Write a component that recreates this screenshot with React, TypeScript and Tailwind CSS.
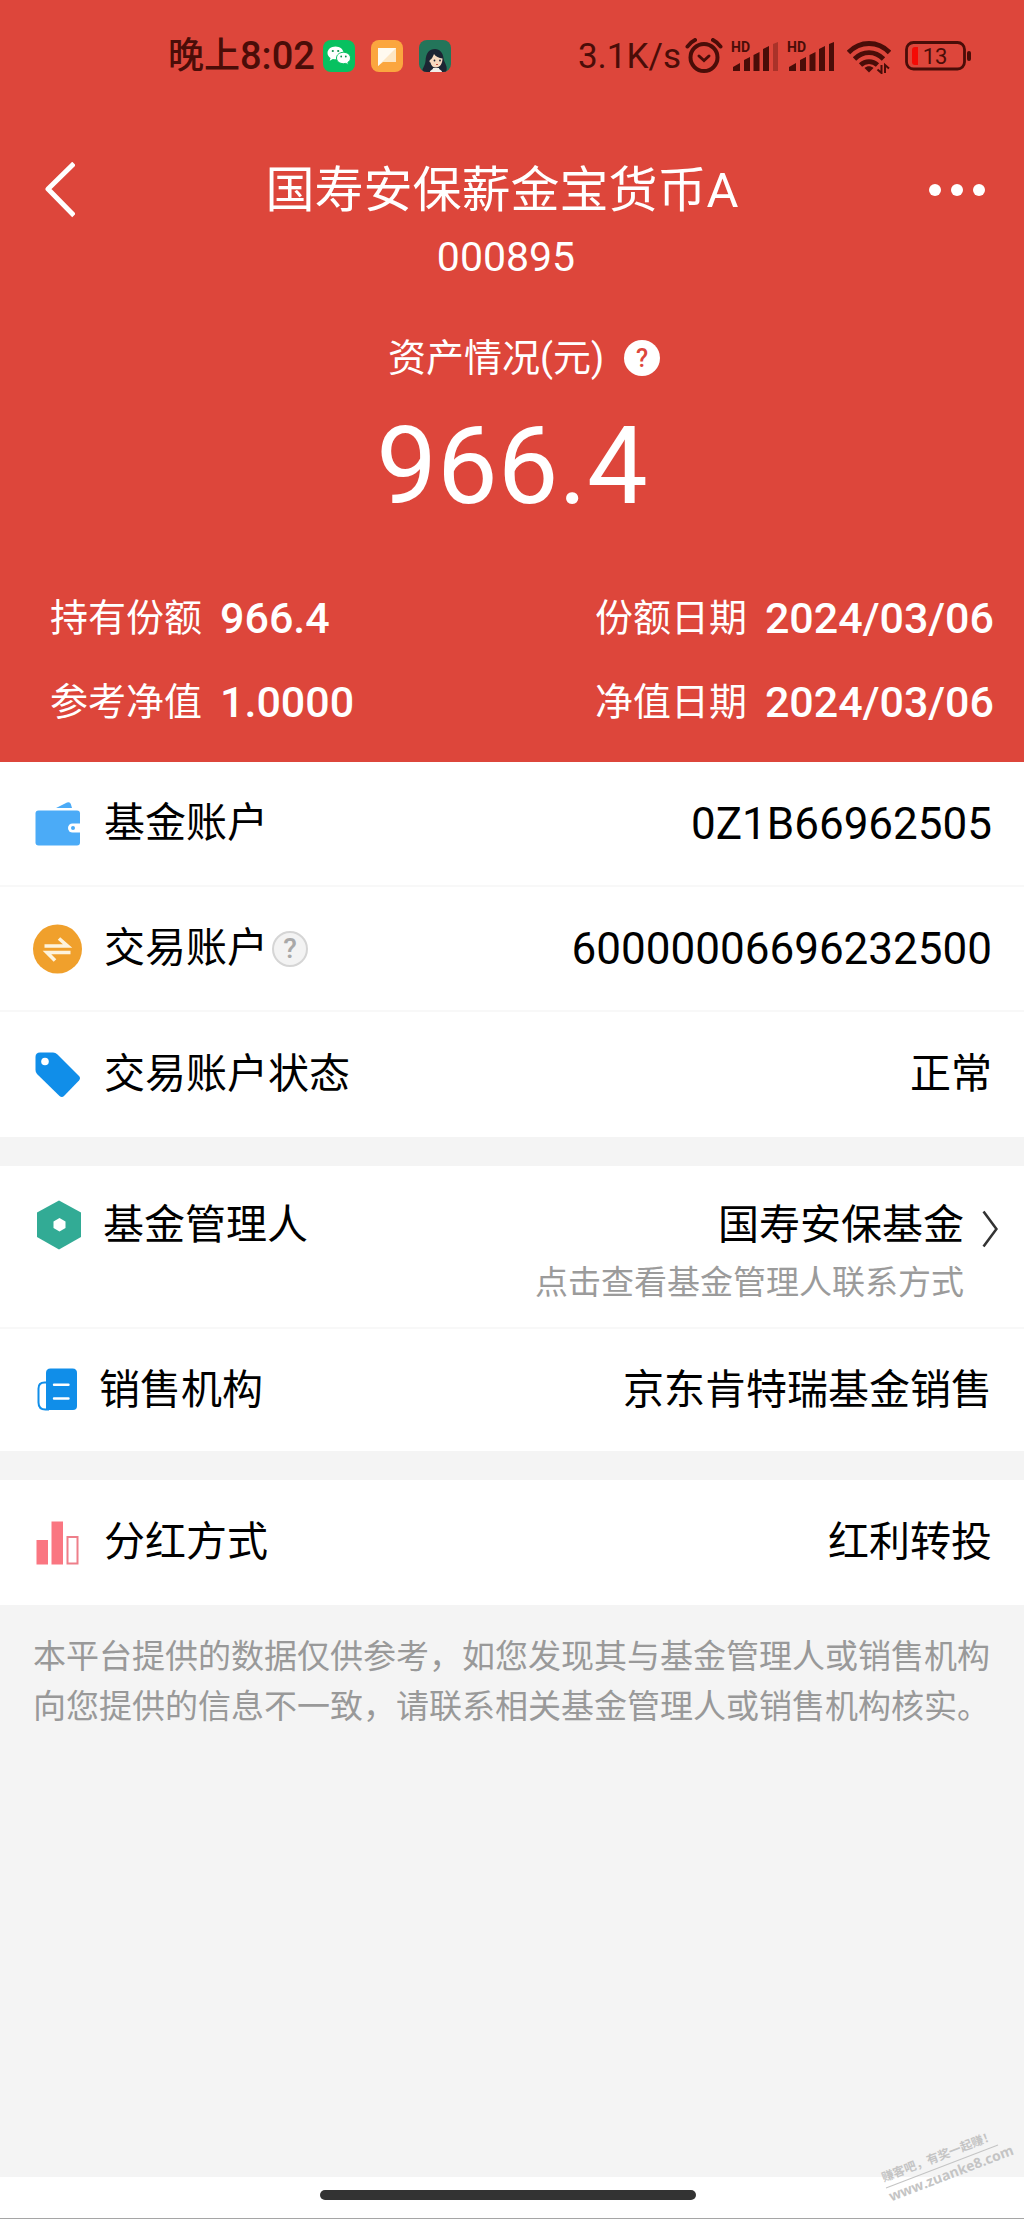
import React from 'react';
import clsx from 'clsx';

const INK = '#4a0d08';

function WeChatIcon() {
  return (
    <svg viewBox="0 0 32 32" className="w-8 h-8">
      <rect width="32" height="32" rx="8" fill="#07c160" />
      <path d="M12.500 6.500c-4.400 0-8 2.800-8 6.400 0 2 1.200 3.800 3 5l-.8 2.800 3.200-1.700c.8.2 1.700.3 2.600.3 4.400 0 8-2.800 8-6.400s-3.600-6.400-8-6.400z" fill="#fff" />
      <path d="M20.500 12.300c-3.900 0-7 2.500-7 5.700s3.100 5.700 7 5.700c.8 0 1.600-.1 2.300-.3l2.700 1.500-.7-2.400c1.700-1.100 2.700-2.700 2.700-4.500 0-3.200-3.100-5.700-7-5.700z" fill="#fff" stroke="#07c160" strokeWidth="1" />
      <g fill="#0b8f4b">
        <circle cx="9.800" cy="11" r="1.100" />
        <circle cx="15.200" cy="11" r="1.100" />
        <circle cx="18.200" cy="16.500" r="0.900" />
        <circle cx="22.800" cy="16.500" r="0.900" />
      </g>
    </svg>
  );
}

function NoteIcon() {
  return (
    <svg viewBox="0 0 32 32" className="w-8 h-8">
      <rect width="32" height="32" rx="8" fill="#fba63f" />
      <path d="M7 8h18v14H12l-5 4z" fill="#fde6c4" />
      <path d="M7 8h18L7 26z" fill="#fffaf0" />
    </svg>
  );
}

function AvatarIcon() {
  return (
    <svg viewBox="0 0 32 32" className="w-8 h-8">
      <defs>
        <clipPath id="avatar">
          <rect width="32" height="32" rx="8" />
        </clipPath>
      </defs>
      <g clipPath="url(#avatar)">
        <rect width="32" height="32" fill="#23755a" />
        <path d="M4 32c-2-3 2-5 2.500-11C7 13 10 9 16 9c5 0 8 4 8.500 9 .5 5 5 8 2.500 14z" fill="#1d2433" />
        <path d="M11 32c0-2 3-2 3-4h6c0 2 3 2 3 4z" fill="#f1efe9" />
        <path d="M11 20c2-1 3-4 4-6 1.500 2.500 5 4 8.500 4.500 0 5-2.500 9-6.500 9-3 0-5-2-5.500-5-1 0-1.500-1.500-.5-2.500z" fill="#f8d9bf" />
        <circle cx="15.500" cy="20.500" r="0.900" fill="#1d2433" />
        <circle cx="21" cy="20.500" r="0.900" fill="#1d2433" />
        <path d="M17 24.500h2" stroke="#c9523f" strokeWidth="1" />
      </g>
    </svg>
  );
}

function AlarmIcon() {
  return (
    <svg viewBox="0 0 38 36" className="w-[38px] h-9" fill="none" stroke={INK} strokeWidth="4" strokeLinecap="round">
      <circle cx="19" cy="19.500" r="13.500" />
      <path d="M14 18l5 4.500 5-4.500" strokeWidth="3" />
      <path d="M2.500 8.500c2-3 4.500-5 7.500-6.500M35.500 8.500c-2-3-4.500-5-7.500-6.500" />
    </svg>
  );
}

function SignalIcon({ full = false }: { full?: boolean }) {
  return (
    <svg viewBox="0 0 48 36" className="w-12 h-9" fill={INK}>
      <text x="0" y="14" fontSize="14" fontWeight="700" fontFamily="Roboto, sans-serif">HD</text>
      <path d="M2 33v-4l7-4v8z" />
      <path d="M13 33V22l6-3v14zM22.500 33V17l6-3v19zM32 33V11l6-3v25z" />
      <path d="M42 33V6l5-2v29z" opacity={full ? 1 : 0.35} />
    </svg>
  );
}

function WifiIcon() {
  return (
    <svg viewBox="0 0 44 36" className="w-11 h-9" fill="none" stroke={INK} strokeWidth="4.800">
      <path d="M1.500 14.500C13 2.500 31 2.500 42.500 14.500" />
      <path d="M7.500 21C16 12.500 28 12.500 36.500 21" />
      <path d="M13.500 27C18.500 22.500 25.500 22.500 30.500 27" />
      <path d="M22 34.500l-4.500-4.500c2.500-2.500 6.500-2.500 9 0z" fill={INK} stroke="none" />
      <path d="M34.500 27v8l-4-3.500M38 35v-8l4 3.500" strokeWidth="2" />
    </svg>
  );
}

function BatteryIcon() {
  return (
    <svg viewBox="0 0 66 30" className="w-[66px] h-[30px]">
      <rect x="1.500" y="1.500" width="58" height="26.500" rx="7" fill="none" stroke={INK} strokeWidth="2.800" />
      <rect x="62" y="10" width="4" height="10" rx="2" fill={INK} />
      <path d="M10 6h3v18h-3q-3 0-3-3V9q0-3 3-3z" fill="#f50a05" />
      <text x="30" y="23" fontSize="22" textAnchor="middle" fill={INK} fontFamily="Roboto, sans-serif">13</text>
    </svg>
  );
}

function WalletIcon() {
  return (
    <svg viewBox="0 0 50 50" className="w-full h-full">
      <path d="M23 9L34 3.500q3-1.200 3.800 1.500L39 9z" fill="#4babf7" />
      <rect x="2.500" y="11.500" width="44.500" height="35" rx="3" fill="#4babf7" />
      <path d="M47.500 24.500h-8a4.500 4.500 0 0 0 0 9h8z" fill="#fff" />
      <circle cx="40" cy="29" r="2" fill="#4babf7" />
    </svg>
  );
}

function TransferIcon() {
  return (
    <svg viewBox="0 0 50 50" className="w-full h-full">
      <circle cx="24.500" cy="25" r="24.500" fill="#f0a02c" />
      <path d="M11.500 22h23L26 14.500M37.500 28.500H14l8 8" fill="none" stroke="#fdf3dd" strokeWidth="3.600" />
    </svg>
  );
}

function TagIcon() {
  return (
    <svg viewBox="0 0 50 50" className="w-full h-full">
      <path d="M2.500 7q0-4.500 4.500-4.500h13q2.500 0 4.500 2L46 26q2 2.200 0 4.500L31 46q-2 2-4.500 0L4 24q-1.500-1.500-1.500-4z" fill="#108ee9" />
      <circle cx="12" cy="11.500" r="3.800" fill="#fff" />
    </svg>
  );
}

function HexagonIcon() {
  return (
    <svg viewBox="0 0 50 50" className="w-full h-full">
      <path d="M26 0.500L48 12.500v24.500L26 49.500 4 37V12.500z" fill="#32ab95" />
      <path d="M26.500 18l6 3.500v6.500l-6 3.500-6-3.500v-6.500z" fill="#fff" />
    </svg>
  );
}

function DocumentIcon() {
  return (
    <svg viewBox="0 0 50 50" className="w-full h-full">
      <path d="M14 17.500h-2.500q-6 0-6 6v14q0 7 7 7H16" fill="#fff" stroke="#108ee9" strokeWidth="2" />
      <path d="M13 8q0-4.500 4.500-4.500h22q4.500 0 4.500 4.500v33q0 4-4 4H13z" fill="#108ee9" />
      <path d="M21 19.800h14.500M21 33.500h14.500" stroke="#fff" strokeWidth="2.400" strokeLinecap="round" />
    </svg>
  );
}

function ChartIcon() {
  return (
    <svg viewBox="0 0 50 50" className="w-full h-full">
      <rect x="3.500" y="22" width="11.500" height="24.500" fill="#fa7681" />
      <rect x="18.500" y="3.500" width="11.500" height="43" fill="#fa7681" />
      <rect x="34.500" y="19" width="10" height="26.500" fill="#fff" stroke="#ee7f8a" strokeWidth="2" />
    </svg>
  );
}

interface StatProps {
  label: string;
  value: string;
}

function Stat({ label, value }: StatProps) {
  return (
    <div className="flex h-[84px] items-center gap-[18px]">
      <dt className="text-[38px]">{label}</dt>
      <dd className="text-[43px] font-medium">{value}</dd>
    </div>
  );
}

interface RowProps {
  icon: React.ReactNode;
  label: string;
  value: string;
  numeric?: boolean;
  help?: boolean;
  compact?: boolean;
}

function Row({ icon, label, value, numeric, help, compact }: RowProps) {
  return (
    <div className={clsx('flex items-center pl-[33px] pr-8', compact ? 'h-[122px] gap-4' : 'h-[125px] gap-[21px]')}>
      <span className="h-[50px] w-[50px] shrink-0">{icon}</span>
      <div className="flex flex-1 items-center gap-1">
        <span className="text-[41px]">{label}</span>
        {help && (
          <button
            type="button"
            aria-label="交易账户说明"
            className="flex h-9 w-9 items-center justify-center rounded-full border-2 border-[#d5d5d5] bg-[#f3f3f3] text-[28px] font-medium leading-none text-[#a8a8a8]"
          >
            ?
          </button>
        )}
      </div>
      <span className={numeric ? 'text-[44px]' : 'text-[41px]'}>{value}</span>
    </div>
  );
}

const accountRows: RowProps[] = [
  { icon: <WalletIcon />, label: '基金账户', value: '0Z1B66962505', numeric: true },
  { icon: <TransferIcon />, label: '交易账户', value: '60000006696232500', numeric: true, help: true },
  { icon: <TagIcon />, label: '交易账户状态', value: '正常' },
];

export default function App() {
  return (
    <div className="relative flex min-h-screen flex-col overflow-hidden bg-[#f4f4f4] font-[Roboto,'Noto_Sans_CJK_SC',sans-serif] leading-none text-black">
      <header className="bg-[#dd463b] pb-[18px] text-white">
        <div className="flex h-28 items-center justify-between pl-[168px] pr-[53px] text-[#4a0d08]">
          <div className="flex items-center gap-2">
            <span className="flex items-center font-medium">
              <span className="text-[36px]">晚上</span>
              <span className="text-[38px]">8:02</span>
            </span>
            <div className="flex gap-4">
              <WeChatIcon />
              <NoteIcon />
              <AvatarIcon />
            </div>
          </div>
          <div className="flex items-center">
            <span className="text-[35px]">3.1K/s</span>
            <div className="ml-1 flex items-center gap-2">
              <AlarmIcon />
              <SignalIcon />
              <SignalIcon full />
            </div>
            <div className="ml-3 flex items-center gap-3.5">
              <WifiIcon />
              <BatteryIcon />
            </div>
          </div>
        </div>

        <nav className="mt-[38px] flex h-20 items-center pl-[45px] pr-[39px]">
          <button type="button" aria-label="返回">
            <svg viewBox="0 0 30 56" className="h-14 w-[30px]" fill="none" stroke="#fff" strokeWidth="5" strokeLinejoin="round">
              <path d="M29 1.500L3 27l26 26.500" />
            </svg>
          </button>
          <h1 className="flex-1 text-center text-[49px]">国寿安保薪金宝货币A</h1>
          <button type="button" aria-label="更多" className="flex gap-2.5">
            <span className="h-3 w-3 rounded-full bg-white" />
            <span className="h-3 w-3 rounded-full bg-white" />
            <span className="h-3 w-3 rounded-full bg-white" />
          </button>
        </nav>
        <p className="pr-3 text-center text-[41px] leading-[54px]">000895</p>

        <div className="mt-[50px] flex h-12 items-center justify-center gap-5 pl-6">
          <h2 className="text-[38px]">资产情况(元)</h2>
          <button
            type="button"
            aria-label="资产情况说明"
            className="flex h-9 w-9 items-center justify-center rounded-full bg-white text-[25px] font-medium text-[#dd463b]"
          >
            ?
          </button>
        </div>
        <p className="mt-6 text-center text-[108px] leading-[120px]">966.4</p>

        <dl className="mt-[50px] flex justify-between pl-[50px] pr-[30px]">
          <div>
            <Stat label="持有份额" value="966.4" />
            <Stat label="参考净值" value="1.0000" />
          </div>
          <div>
            <Stat label="份额日期" value="2024/03/06" />
            <Stat label="净值日期" value="2024/03/06" />
          </div>
        </dl>
      </header>

      <main className="flex flex-1 flex-col">
        <section className="divide-y-2 divide-[#f8f8f8] bg-white">
          {accountRows.map((row) => (
            <Row key={row.label} {...row} />
          ))}
        </section>

        <section className="mt-[29px] divide-y-2 divide-[#f8f8f8] bg-white">
          <button type="button" className="flex h-[163px] w-full gap-5 pl-[33px] pr-[26px] pt-[34px] text-left">
            <span className="h-[50px] w-[50px] shrink-0">
              <HexagonIcon />
            </span>
            <span className="flex-1 text-[41px] leading-[50px]">基金管理人</span>
            <span className="text-right">
              <span className="block text-[41px] leading-[50px]">国寿安保基金</span>
              <span className="block text-[33px] leading-[66px] text-[#9b9b9b]">点击查看基金管理人联系方式</span>
            </span>
            <svg viewBox="0 0 16 54" className="-ml-0.5 h-[54px] w-4 pt-1" fill="none" stroke="#333" strokeWidth="2.800">
              <path d="M1 8l14 19L1 46" />
            </svg>
          </button>
          <Row icon={<DocumentIcon />} label="销售机构" value="京东肯特瑞基金销售" compact />
        </section>

        <section className="mt-[29px] bg-white">
          <Row icon={<ChartIcon />} label="分红方式" value="红利转投" />
        </section>

        <p className="px-[33px] pt-[27px] text-[33px] leading-[50px] text-[#999]">
          本平台提供的数据仅供参考，如您发现其与基金管理人或销售机构向您提供的信息不一致，请联系相关基金管理人或销售机构核实。
        </p>
      </main>

      <footer className="flex h-[42px] items-center justify-center border-b border-[#a5a5a5] bg-white pb-1.5 pr-2">
        <div className="h-2.5 w-[37%] rounded-full bg-[#333]" />
      </footer>

      <div className="absolute bottom-9 right-[22px] w-[120px] -rotate-[21deg] text-center font-bold text-[#c4c4c4]">
        <p className="whitespace-nowrap border-b border-[#c4c4c4] pb-1 text-[12px]">赚客吧，有奖一起赚！</p>
        <p className="pt-0.5 font-['Open_Sans',sans-serif] text-[14px]">www.zuanke8.com</p>
      </div>
    </div>
  );
}
